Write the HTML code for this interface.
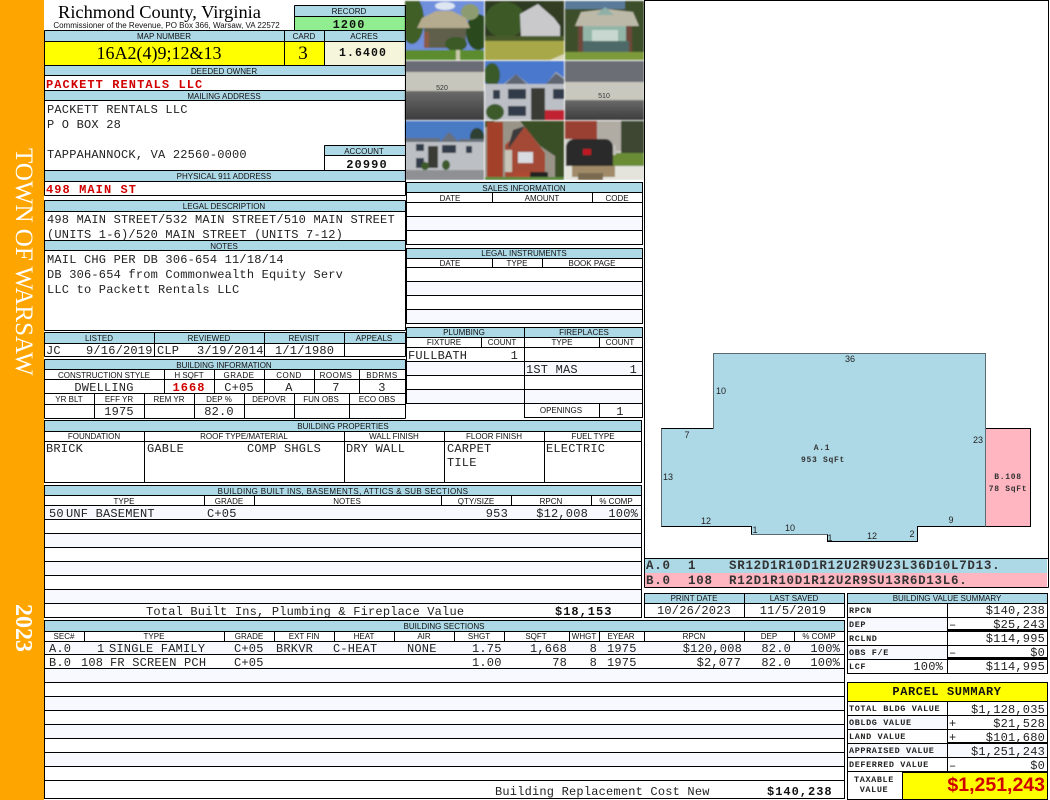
<!DOCTYPE html>
<html><head><meta charset="utf-8"><title>Richmond County, Virginia</title>
<style>
html,body{margin:0;padding:0;background:#fff;width:1050px;height:800px;overflow:hidden}
svg{display:block}
.ln{fill:none;stroke:#000;stroke-width:1;shape-rendering:crispEdges}
.h{font:8px "Liberation Sans",Arial,sans-serif;text-anchor:middle;fill:#111;letter-spacing:0}
.m{font:12px "Liberation Mono",monospace;fill:#222;letter-spacing:.2px}
.c{text-anchor:middle}.r{text-anchor:end}
.b{font-weight:bold;fill:#111}
.red{fill:#d00000;font-weight:bold;letter-spacing:1.08px}
.sm{font:bold 8.5px "Liberation Mono",monospace;fill:#222;letter-spacing:.6px}
.k{font:9px "Liberation Sans",sans-serif;fill:#222;text-anchor:middle}
.a{font:bold 8px "Liberation Mono",monospace;fill:#333;text-anchor:middle;letter-spacing:.7px}
.s{font:bold 12.5px "Liberation Mono",monospace;fill:#333;letter-spacing:.72px}
</style></head><body>
<svg width="1050" height="800" viewBox="0 0 1050 800" xmlns="http://www.w3.org/2000/svg">
<defs>
<filter id="bl" x="0" y="0" width="1" height="1"><feGaussianBlur stdDeviation="0.7"/></filter>
<clipPath id="p1"><rect x="405" y="1" width="79" height="59"/></clipPath>
<clipPath id="p2"><rect x="485" y="1" width="79" height="59"/></clipPath>
<clipPath id="p3"><rect x="565" y="1" width="79" height="59"/></clipPath>
<clipPath id="p4"><rect x="405" y="61" width="79" height="59"/></clipPath>
<clipPath id="p5"><rect x="485" y="61" width="79" height="59"/></clipPath>
<clipPath id="p6"><rect x="565" y="61" width="79" height="59"/></clipPath>
<clipPath id="p7"><rect x="405" y="121" width="79" height="59"/></clipPath>
<clipPath id="p8"><rect x="485" y="121" width="79" height="59"/></clipPath>
<clipPath id="p9"><rect x="565" y="121" width="79" height="59"/></clipPath>
<linearGradient id="gd" x1="0" y1="0" x2="0" y2="1"><stop offset="0" stop-color="#6a6a6a"/><stop offset="1" stop-color="#3c3c3c"/></linearGradient>
</defs>
<rect x="0" y="0" width="44" height="800" fill="#FFA500"/>
<text transform="translate(16,148) rotate(90)" style="font:25px 'Liberation Serif',serif;fill:#fff">TOWN OF WARSAW</text>
<text transform="translate(16,604) rotate(90)" style="font:bold 24px 'Liberation Serif',serif;fill:#fff">2023</text>

<!-- header fills -->
<g fill="#ADD8E6">
<rect x="294" y="5" width="111" height="11"/>
<rect x="44" y="30" width="361" height="11"/>
<rect x="44" y="65" width="361" height="10"/>
<rect x="44" y="90" width="361" height="10"/>
<rect x="324" y="145" width="81" height="10"/>
<rect x="44" y="170" width="361" height="11"/>
<rect x="44" y="200" width="361" height="11"/>
<rect x="44" y="240" width="361" height="10"/>
<rect x="44" y="332" width="361" height="11"/>
<rect x="44" y="359" width="361" height="10"/>
<rect x="406" y="182" width="237" height="10"/>
<rect x="406" y="248" width="237" height="10"/>
<rect x="406" y="327" width="237" height="10"/>
<rect x="44" y="420" width="597" height="11"/>
<rect x="44" y="485" width="597" height="10"/>
<rect x="44" y="620" width="800" height="11"/>
<rect x="644" y="593" width="200" height="10"/>
<rect x="847" y="593" width="200" height="10"/>
<rect x="645" y="559" width="402" height="14"/>
</g>
<rect x="294" y="16" width="111" height="14" fill="#90EE90"/>
<rect x="44" y="41" width="280" height="24" fill="#FFFF00"/>
<rect x="324" y="41" width="81" height="24" fill="#F5F5DC"/>
<rect x="645" y="573" width="402" height="14" fill="#FFB6C1"/>
<rect x="847" y="682" width="200" height="19" fill="#FFFF00"/>
<rect x="902" y="772" width="145" height="27" fill="#FFFF00"/>
<!-- alternating rows -->
<g fill="#F8F8FF">
<rect x="406" y="216" width="237" height="14"/>
<rect x="406" y="281" width="237" height="14"/>
<rect x="406" y="309" width="237" height="14"/>
<rect x="406" y="361" width="237" height="14"/>
<rect x="406" y="389" width="237" height="14"/>
<rect x="44" y="505" width="597" height="14"/>
<rect x="44" y="533" width="597" height="14"/>
<rect x="44" y="561" width="597" height="14"/>
<rect x="44" y="589" width="597" height="14"/>
<rect x="44" y="641" width="800" height="13"/>
<rect x="44" y="668" width="800" height="14"/>
<rect x="44" y="696" width="800" height="14"/>
<rect x="44" y="724" width="800" height="14"/>
<rect x="44" y="752" width="800" height="14"/>
<rect x="847" y="617" width="100" height="14"/>
<rect x="847" y="645" width="100" height="14"/>
<rect x="847" y="715" width="100" height="14"/>
<rect x="847" y="743" width="200" height="14"/>
</g>

<!-- photos -->
<g filter="url(#bl)">
<g clip-path="url(#p1)">
<rect x="405" y="1" width="79" height="59" fill="#6f8fdc"/>
<ellipse cx="445" cy="6" rx="10" ry="4" fill="#dfe6f2"/>
<ellipse cx="412" cy="20" rx="12" ry="24" fill="#3f5f26"/>
<ellipse cx="478" cy="32" rx="12" ry="18" fill="#2b4a1c"/>
<ellipse cx="470" cy="12" rx="9" ry="8" fill="#8c9c70"/>
<path d="M422 18l14-7h16l14 7 4 10h-53z" fill="#b5ab8e"/>
<rect x="424" y="28" width="42" height="20" fill="#5e5f4c"/>
<rect x="424" y="32" width="5" height="16" fill="#8a5a44"/>
<ellipse cx="456" cy="44" rx="11" ry="7" fill="#3a5a28"/>
<rect x="405" y="50" width="79" height="10" fill="#5c8c2e"/>
<rect x="456" y="50" width="4" height="10" fill="#c8c8a8"/>
</g>
<g clip-path="url(#p2)">
<rect x="485" y="1" width="79" height="59" fill="#2f3a22"/>
<ellipse cx="505" cy="20" rx="20" ry="18" fill="#3c5a28"/>
<ellipse cx="555" cy="10" rx="14" ry="12" fill="#333d22"/>
<path d="M520 14l18-10 16 14 6 8v10h-39z" fill="#c9c9cc"/>
<rect x="485" y="36" width="79" height="6" fill="#4a5a2c"/>
<rect x="485" y="41" width="79" height="19" fill="#a8a84a"/>
<path d="M550 60l14-6v6z" fill="#d8d8b8"/>
</g>
<g clip-path="url(#p3)">
<rect x="565" y="1" width="79" height="59" fill="#3c4f2a"/>
<rect x="565" y="1" width="60" height="8" fill="#5a7a9a"/>
<path d="M575 26l6-14 26-3 26 3 6 14z" fill="#bdb9a8"/>
<path d="M596 15l9-8 9 8z" fill="#8fb0a8"/>
<rect x="579" y="26" width="53" height="26" fill="#93b5a8"/>
<rect x="578" y="26" width="5" height="26" fill="#6e4a3a"/>
<rect x="626" y="26" width="6" height="26" fill="#6e4a3a"/>
<rect x="592" y="30" width="26" height="14" fill="#c8d8d0"/>
<rect x="583" y="41" width="46" height="11" fill="#4e6a68"/>
<rect x="565" y="52" width="79" height="8" fill="#7d9a3a"/>
</g>
<g clip-path="url(#p4)">
<rect x="405" y="61" width="79" height="11" fill="#6a6c74"/>
<rect x="405" y="72" width="79" height="19" fill="#c6c6bc"/>
<rect x="405" y="91" width="79" height="29" fill="url(#gd)"/>
</g>
<g clip-path="url(#p5)">
<rect x="485" y="61" width="79" height="59" fill="#4a78cc"/>
<ellipse cx="492" cy="75" rx="8" ry="12" fill="#3a5a2c"/>
<path d="M485 84h19l12-10 12 10h18l10-12 8 6v42h-79z" fill="#bcc0c6"/>
<path d="M505 84l11-10 11 10z" fill="#5e6672"/>
<path d="M546 84l10-11 8 6v5z" fill="#5e6672"/>
<rect x="493" y="90" width="7" height="9" fill="#333a48"/>
<rect x="508" y="89" width="18" height="10" fill="#333a48"/>
<rect x="531" y="88" width="14" height="32" fill="#3a3a34"/>
<rect x="553" y="89" width="11" height="10" fill="#333a48"/>
<rect x="508" y="106" width="18" height="10" fill="#333a48"/>
<ellipse cx="495" cy="112" rx="9" ry="8" fill="#3c5a2c"/>
<rect x="545" y="110" width="19" height="10" fill="#c02030"/>
</g>
<g clip-path="url(#p6)">
<rect x="565" y="61" width="79" height="21" fill="#6c6e76"/>
<rect x="565" y="82" width="79" height="18" fill="#c8c8be"/>
<rect x="565" y="100" width="79" height="20" fill="url(#gd)"/>
</g>
<g clip-path="url(#p7)">
<rect x="405" y="121" width="79" height="59" fill="#4a7ac4"/>
<ellipse cx="477" cy="137" rx="7" ry="9" fill="#2f4030"/>
<rect x="405" y="142" width="79" height="28" fill="#bcc0c4"/>
<path d="M440 142l9-10 10 10z" fill="#68707c"/>
<rect x="405" y="138" width="35" height="4" fill="#68707c"/>
<rect x="459" y="139" width="25" height="3" fill="#68707c"/>
<rect x="416" y="144" width="8" height="7" fill="#333a48"/>
<rect x="428" y="146" width="10" height="22" fill="#3a3a34"/>
<rect x="442" y="145" width="14" height="8" fill="#333a48"/>
<rect x="466" y="146" width="6" height="7" fill="#333a48"/>
<rect x="416" y="158" width="8" height="10" fill="#333a48"/>
<ellipse cx="446" cy="165" rx="4" ry="5" fill="#3c5a2c"/>
<ellipse cx="425" cy="166" rx="4" ry="4" fill="#3c5a2c"/>
<rect x="405" y="170" width="79" height="10" fill="#8e9094"/>
</g>
<g clip-path="url(#p8)">
<rect x="485" y="121" width="79" height="59" fill="#3a5028"/>
<path d="M495 121h25l20 25 15 10v22h-70v-50z" fill="#9a9488"/>
<rect x="487" y="122" width="16" height="56" fill="#a3402c"/>
<path d="M505 145l20-18 20 26v24h-40z" fill="#a34a34"/>
<path d="M508 148l5-18 12-4-16 22z" fill="#3a3a3c"/>
<rect x="518" y="152" width="15" height="11" fill="#d8dce0"/>
<rect x="505" y="150" width="7" height="22" fill="#c8c4b8"/>
<rect x="514" y="172" width="20" height="5" fill="#b04a30"/>
<rect x="530" y="172" width="18" height="8" fill="#222"/>
<rect x="485" y="177" width="79" height="3" fill="#5c8a3c"/>
</g>
<g clip-path="url(#p9)">
<rect x="565" y="121" width="79" height="59" fill="#cfcfc8"/>
<rect x="565" y="121" width="32" height="18" fill="#9a4030"/>
<rect x="597" y="121" width="24" height="30" fill="#b0aca4"/>
<rect x="621" y="121" width="23" height="32" fill="#3e4630"/>
<rect x="600" y="153" width="44" height="13" fill="#6a8c34"/>
<rect x="565" y="166" width="79" height="14" fill="#e4e4dc"/>
<rect x="600" y="145" width="16" height="10" fill="#c0c0b8"/>
<path d="M566 148c0-5 3-9 9-9h30c5 0 8 4 8 9v18h-47z" fill="#2a2a2c"/>
<rect x="572" y="166" width="43" height="11" fill="#a08a68"/>
<rect x="578" y="173" width="25" height="7" fill="#7a6a50"/>
<rect x="583" y="149" width="8" height="6" fill="#c01820"/>
</g>
</g>
<text x="442" y="90" class="k" style="font-size:7px;fill:#333">520</text>
<text x="604" y="98" class="k" style="font-size:7px;fill:#333">510</text>

<!-- sketch -->
<path d="M713.5 353.5H985.5V526.5H917.5V541.5H827.5V534.5H751.5V526.5H661.5V428.5H713.5Z" fill="#ADD8E6"/>
<rect x="985" y="428" width="45" height="98" fill="#FFB6C1"/>
<path class="ln" d="M985.5 428.5H1030.5V526.5H917.5V541.5H827.5V534.5H751.5V526.5H661.5V428.5H713.5"/>
<path d="M713.5 428.5V353.5H985.5V526.5M661.5 428.5V526.5M827.5 534.5H751.5" fill="none" stroke="#5a6a70" stroke-width="1" shape-rendering="crispEdges"/>
<text class="k" x="850" y="362">36</text><text class="k" x="721" y="394">10</text><text class="k" x="687" y="438">7</text>
<text class="k" x="668" y="480">13</text><text class="k" x="706" y="524">12</text><text class="k" x="755" y="533">1</text>
<text class="k" x="790" y="531">10</text><text class="k" x="830" y="541">1</text><text class="k" x="872" y="539">12</text>
<text class="k" x="912" y="537">2</text><text class="k" x="951" y="523">9</text><text class="k" x="978" y="443">23</text>
<text class="a" x="822" y="450">A.1</text><text class="a" x="823" y="462">953 SqFt</text>
<text class="a" x="1008" y="479">B.108</text><text class="a" x="1008" y="491">78 SqFt</text>
<text class="s" x="646" y="569">A.0</text><text class="s" x="688" y="569">1</text><text class="s" x="729" y="569">SR12D1R10D1R12U2R9U23L36D10L7D13.</text>
<text class="s" x="646" y="584">B.0</text><text class="s" x="688" y="584">108</text><text class="s" x="729" y="584">R12D1R10D1R12U2R9SU13R6D13L6.</text>

<!-- grid lines -->
<path class="ln" d="
M294.5 5.5H405.5V30.5M294.5 5.5V30.5M294.5 16.5H405.5
M44.5 30.5H405.5M44.5 41.5H405.5M44.5 65.5H405.5M44.5 75.5H405.5M44.5 90.5H405.5M44.5 100.5H405.5M44.5 170.5H405.5M44.5 181.5H405.5M44.5 195.5H405.5
M44.5 30.5V195.5M405.5 30.5V195.5M284.5 30.5V65.5M324.5 30.5V65.5
M324.5 145.5H405.5M324.5 155.5H405.5M324.5 145.5V170.5
M44.5 200.5H405.5M44.5 211.5H405.5M44.5 240.5H405.5M44.5 250.5H405.5M44.5 330.5H405.5M44.5 200.5V330.5M405.5 200.5V330.5
M44.5 332.5H405.5M44.5 343.5H405.5M44.5 356.5H405.5M44.5 332.5V356.5M405.5 332.5V356.5M154.5 332.5V356.5M264.5 332.5V356.5M344.5 332.5V356.5
M44.5 359.5H405.5M44.5 369.5H405.5M44.5 379.5H405.5M44.5 393.5H405.5M44.5 404.5H405.5M44.5 418.5H405.5M44.5 359.5V418.5M405.5 359.5V418.5
M164.5 369.5V393.5M214.5 369.5V393.5M264.5 369.5V393.5M314.5 369.5V393.5M359.5 369.5V393.5
M94.5 393.5V418.5M144.5 393.5V418.5M194.5 393.5V418.5M244.5 393.5V418.5M294.5 393.5V418.5M349.5 393.5V418.5
M644.5 0V587.5M1048.5 0V587.5M644.5 .5H1048.5M644.5 558.5H1048.5M644.5 587.5H1048.5
M406.5 182.5H642.5V244.5H406.5ZM406.5 192.5H642.5M406.5 202.5H642.5M406.5 216.5H642.5M406.5 230.5H642.5M492.5 192.5V202.5M592.5 192.5V202.5
M406.5 248.5H642.5V323.5H406.5ZM406.5 258.5H642.5M406.5 267.5H642.5M406.5 281.5H642.5M406.5 295.5H642.5M406.5 309.5H642.5M492.5 258.5V267.5M542.5 258.5V267.5
M406.5 327.5H642.5V403.5M406.5 327.5V403.5H642.5M406.5 337.5H642.5M406.5 347.5H642.5M406.5 361.5H642.5M406.5 375.5H642.5M406.5 389.5H642.5M524.5 327.5V417.5H642.5V403.5M599.5 337.5V347.5M599.5 403.5V417.5M481.5 337.5V347.5
M44.5 420.5H641.5V482.5H44.5ZM44.5 431.5H641.5M44.5 441.5H641.5M144.5 431.5V482.5M344.5 431.5V482.5M444.5 431.5V482.5M544.5 431.5V482.5
M44.5 485.5H641.5V617.5H44.5ZM44.5 495.5H641.5M44.5 505.5H641.5M44.5 519.5H641.5M44.5 533.5H641.5M44.5 547.5H641.5M44.5 561.5H641.5M44.5 575.5H641.5M44.5 589.5H641.5M44.5 603.5H641.5
M204.5 495.5V505.5M254.5 495.5V505.5M441.5 495.5V505.5M511.5 495.5V505.5M591.5 495.5V505.5
M44.5 620.5H844.5V798.5H44.5ZM44.5 631.5H844.5M44.5 641.5H844.5M44.5 654.5H844.5M44.5 668.5H844.5M44.5 682.5H844.5M44.5 696.5H844.5M44.5 710.5H844.5M44.5 724.5H844.5M44.5 738.5H844.5M44.5 752.5H844.5M44.5 766.5H844.5M44.5 780.5H844.5
M84.5 631.5V641.5M224.5 631.5V641.5M274.5 631.5V641.5M334.5 631.5V641.5M394.5 631.5V641.5M454.5 631.5V641.5M504.5 631.5V641.5M569.5 631.5V641.5M599.5 631.5V641.5M644.5 631.5V641.5M744.5 631.5V641.5M794.5 631.5V641.5
M644.5 593.5H844.5V617.5H644.5ZM644.5 603.5H844.5M744.5 593.5V617.5
M847.5 593.5H1047.5V673.5H847.5ZM847.5 603.5H1047.5M847.5 617.5H1047.5M847.5 631.5H1047.5M847.5 645.5H1047.5M847.5 659.5H1047.5M947.5 603.5V673.5
M847.5 682.5H1047.5V799.5H847.5ZM847.5 701.5H1047.5M847.5 715.5H1047.5M847.5 729.5H1047.5M847.5 743.5H1047.5M847.5 757.5H1047.5M847.5 771.5H1047.5M947.5 701.5V771.5M902.5 771.5V799.5
"/>
<g fill="#000">
<rect x="947" y="629" width="101" height="2"/>
<rect x="947" y="657" width="101" height="2"/>
<rect x="947" y="742" width="101" height="2"/>
<rect x="902" y="771" width="146" height="2"/>
</g>

<!-- top text -->
<text x="159.5" y="18" class="c" style="font:18.4px 'Liberation Serif',serif;fill:#000">Richmond County, Virginia</text>
<text x="166.5" y="28" class="c" style="font:8px 'Liberation Sans',sans-serif;fill:#111">Commissioner of the Revenue, PO Box 366, Warsaw, VA 22572</text>
<text class="h" x="349" y="14">RECORD</text><text class="m b c" x="349" y="28" style="letter-spacing:1px">1200</text>
<text class="h" x="164" y="39">MAP NUMBER</text><text class="h" x="304" y="39">CARD</text><text class="h" x="364" y="39">ACRES</text>
<text x="159" y="59" class="c" style="font:18px 'Liberation Serif',serif;fill:#000">16A2(4)9;12&amp;13</text>
<text x="303" y="59" class="c" style="font:19px 'Liberation Serif',serif;fill:#000">3</text>
<text class="m b c" x="363" y="56" style="letter-spacing:1.1px;font-size:11.5px">1.6400</text>
<text class="h" x="224" y="74">DEEDED OWNER</text>
<text class="m red" x="46" y="88">PACKETT RENTALS LLC</text>
<text class="h" x="224" y="99">MAILING ADDRESS</text>
<text class="m" x="47" y="113">PACKETT RENTALS LLC</text>
<text class="m" x="47" y="128">P O BOX 28</text>
<text class="m" x="47" y="158">TAPPAHANNOCK, VA 22560-0000</text>
<text class="h" x="364" y="154">ACCOUNT</text>
<text class="m b c" x="367" y="168" style="letter-spacing:1.1px">20990</text>
<text class="h" x="224" y="179">PHYSICAL 911 ADDRESS</text>
<text class="m red" x="46" y="193">498 MAIN ST</text>
<text class="h" x="224" y="209">LEGAL DESCRIPTION</text>
<text class="m" x="47" y="223">498 MAIN STREET/532 MAIN STREET/510 MAIN STREET</text>
<text class="m" x="47" y="238">(UNITS 1-6)/520 MAIN STREET (UNITS 7-12)</text>
<text class="h" x="224" y="249">NOTES</text>
<text class="m" x="47" y="263">MAIL CHG PER DB 306-654 11/18/14</text>
<text class="m" x="47" y="278">DB 306-654 from Commonwealth Equity Serv</text>
<text class="m" x="47" y="293">LLC to Packett Rentals LLC</text>
<text class="h" x="99" y="341">LISTED</text><text class="h" x="209" y="341">REVIEWED</text><text class="h" x="304" y="341">REVISIT</text><text class="h" x="374" y="341">APPEALS</text>
<text class="m" x="46" y="354">JC</text><text class="m" x="86" y="354">9/16/2019</text><text class="m" x="157" y="354">CLP</text><text class="m" x="197" y="354">3/19/2014</text><text class="m" x="275" y="354">1/1/1980</text>
<text class="h" x="224" y="368">BUILDING INFORMATION</text>
<text class="h" x="104" y="378">CONSTRUCTION STYLE</text><text class="h" x="189" y="378">H SQFT</text><text class="h" x="239" y="378" style="letter-spacing:.5px">GRADE</text><text class="h" x="289" y="378" style="letter-spacing:.5px">COND</text><text class="h" x="336" y="378" style="letter-spacing:.5px">ROOMS</text><text class="h" x="382" y="378" style="letter-spacing:.5px">BDRMS</text>
<text class="m c" x="104" y="391">DWELLING</text><text class="m red c" x="189" y="391">1668</text><text class="m c" x="239" y="391">C+05</text><text class="m c" x="289" y="391">A</text><text class="m c" x="336" y="391">7</text><text class="m c" x="382" y="391">3</text>
<text class="h" x="69" y="402">YR BLT</text><text class="h" x="119" y="402">EFF YR</text><text class="h" x="169" y="402">REM YR</text><text class="h" x="219" y="402">DEP %</text><text class="h" x="269" y="402">DEPOVR</text><text class="h" x="321" y="402">FUN OBS</text><text class="h" x="377" y="402">ECO OBS</text>
<text class="m c" x="119" y="415">1975</text><text class="m c" x="219" y="415">82.0</text>

<!-- right column tables -->
<text class="h" x="524" y="191">SALES INFORMATION</text>
<text class="h" x="450" y="201">DATE</text><text class="h" x="542" y="201">AMOUNT</text><text class="h" x="617" y="201">CODE</text>
<text class="h" x="524" y="256">LEGAL INSTRUMENTS</text>
<text class="h" x="450" y="266">DATE</text><text class="h" x="517" y="266">TYPE</text><text class="h" x="592" y="266">BOOK PAGE</text>
<text class="h" x="464" y="335">PLUMBING</text><text class="h" x="584" y="335">FIREPLACES</text>
<text class="h" x="444" y="345">FIXTURE</text><text class="h" x="502" y="345">COUNT</text><text class="h" x="562" y="345">TYPE</text><text class="h" x="620" y="345">COUNT</text>
<text class="m" x="408" y="359">FULLBATH</text><text class="m r" x="518" y="359">1</text>
<text class="m" x="526" y="373">1ST MAS</text><text class="m r" x="637" y="373">1</text>
<text class="h" x="561" y="413">OPENINGS</text><text class="m c" x="620" y="415">1</text>

<!-- building properties -->
<text class="h" x="343" y="429">BUILDING PROPERTIES</text>
<text class="h" x="94" y="439">FOUNDATION</text><text class="h" x="244" y="439">ROOF TYPE/MATERIAL</text><text class="h" x="394" y="439">WALL FINISH</text><text class="h" x="494" y="439">FLOOR FINISH</text><text class="h" x="593" y="439">FUEL TYPE</text>
<text class="m" x="46" y="452">BRICK</text><text class="m" x="147" y="452">GABLE</text><text class="m" x="247" y="452">COMP SHGLS</text><text class="m" x="346" y="452">DRY WALL</text><text class="m" x="447" y="452">CARPET</text><text class="m" x="447" y="466">TILE</text><text class="m" x="546" y="452">ELECTRIC</text>

<text class="h" x="343" y="494" style="letter-spacing:.35px">BUILDING BUILT INS, BASEMENTS, ATTICS &amp; SUB SECTIONS</text>
<text class="h" x="124" y="504">TYPE</text><text class="h" x="229" y="504">GRADE</text><text class="h" x="347" y="504">NOTES</text><text class="h" x="476" y="504">QTY/SIZE</text><text class="h" x="551" y="504">RPCN</text><text class="h" x="616" y="504">% COMP</text>
<text class="m" x="49" y="517">50</text><text class="m" x="66" y="517">UNF BASEMENT</text><text class="m" x="207" y="517">C+05</text><text class="m r" x="508" y="517">953</text><text class="m r" x="588" y="517">$12,008</text><text class="m r" x="638" y="517">100%</text>
<text class="m" x="146" y="615">Total Built Ins, Plumbing &amp; Fireplace Value</text>
<text class="m b" x="555" y="615" style="letter-spacing:1px">$18,153</text>

<!-- sections -->
<text class="h" x="444" y="629">BUILDING SECTIONS</text>
<text class="h" x="64" y="639">SEC#</text><text class="h" x="154" y="639">TYPE</text><text class="h" x="249" y="639">GRADE</text><text class="h" x="304" y="639">EXT FIN</text><text class="h" x="364" y="639">HEAT</text><text class="h" x="424" y="639">AIR</text><text class="h" x="479" y="639">SHGT</text><text class="h" x="536" y="639">SQFT</text><text class="h" x="584" y="639">WHGT</text><text class="h" x="621" y="639">EYEAR</text><text class="h" x="694" y="639">RPCN</text><text class="h" x="769" y="639">DEP</text><text class="h" x="819" y="639">% COMP</text>
<text class="m" x="49" y="652">A.0</text><text class="m" x="97" y="652">1</text><text class="m" x="109" y="652">SINGLE FAMILY</text><text class="m" x="234" y="652">C+05</text><text class="m" x="276" y="652">BRKVR</text><text class="m" x="333" y="652">C-HEAT</text><text class="m" x="407" y="652">NONE</text><text class="m" x="472" y="652">1.75</text><text class="m r" x="567" y="652">1,668</text><text class="m r" x="597" y="652">8</text><text class="m" x="607" y="652">1975</text><text class="m r" x="742" y="652">$120,008</text><text class="m r" x="791" y="652">82.0</text><text class="m r" x="840" y="652">100%</text>
<text class="m" x="49" y="666">B.0</text><text class="m" x="81" y="666">108</text><text class="m" x="110" y="666">FR SCREEN PCH</text><text class="m" x="234" y="666">C+05</text><text class="m" x="472" y="666">1.00</text><text class="m r" x="567" y="666">78</text><text class="m r" x="597" y="666">8</text><text class="m" x="607" y="666">1975</text><text class="m r" x="741" y="666">$2,077</text><text class="m r" x="791" y="666">82.0</text><text class="m r" x="840" y="666">100%</text>
<text class="m" x="495" y="795">Building Replacement Cost New</text>
<text class="m b" x="767" y="795" style="letter-spacing:1px">$140,238</text>

<!-- print date -->
<text class="h" x="694" y="601">PRINT DATE</text><text class="h" x="794" y="601">LAST SAVED</text>
<text class="m c" x="694" y="614">10/26/2023</text><text class="m c" x="793" y="614">11/5/2019</text>

<!-- value summary -->
<text class="h" x="947" y="601">BUILDING VALUE SUMMARY</text>
<text class="sm" x="849" y="613">RPCN</text><text class="m r" x="1045" y="614">$140,238</text>
<text class="sm" x="849" y="627">DEP</text><text class="m" x="949" y="628">–</text><text class="m r" x="1045" y="628">$25,243</text>
<text class="sm" x="849" y="641">RCLND</text><text class="m r" x="1045" y="642">$114,995</text>
<text class="sm" x="849" y="655">OBS F/E</text><text class="m" x="949" y="656">–</text><text class="m r" x="1045" y="656">$0</text>
<text class="sm" x="849" y="669">LCF</text><text class="m r" x="943" y="670">100%</text><text class="m r" x="1045" y="670">$114,995</text>

<text x="947" y="695" class="m b c" style="letter-spacing:.6px">PARCEL SUMMARY</text>
<text class="sm" x="849" y="711">TOTAL BLDG VALUE</text><text class="m r" x="1045" y="713">$1,128,035</text>
<text class="sm" x="849" y="725">OBLDG VALUE</text><text class="m" x="949" y="727">+</text><text class="m r" x="1045" y="727">$21,528</text>
<text class="sm" x="849" y="739">LAND VALUE</text><text class="m" x="949" y="741">+</text><text class="m r" x="1045" y="741">$101,680</text>
<text class="sm" x="849" y="753">APPRAISED VALUE</text><text class="m r" x="1045" y="755">$1,251,243</text>
<text class="sm" x="849" y="767">DEFERRED VALUE</text><text class="m" x="949" y="769">–</text><text class="m r" x="1045" y="769">$0</text>
<text class="sm c" x="874" y="782">TAXABLE</text><text class="sm c" x="874" y="792">VALUE</text>
<text x="1045" y="791" class="r" style="font:bold 19.5px 'Liberation Sans',sans-serif;fill:#d00000">$1,251,243</text>
</svg>
</body></html>
